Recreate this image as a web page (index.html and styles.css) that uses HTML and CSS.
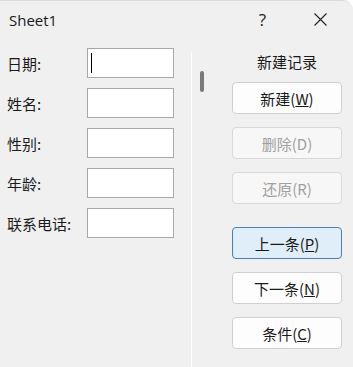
FILE: index.html
```html
<!DOCTYPE html>
<html lang="zh-CN">
  <head>
    <meta charset="UTF-8" />
    <title>Sheet1</title>
    <link rel="stylesheet" href="styles.css">
  </head>
  <body>
    <div class="window">
      <div class="titlebar">
        <span class="title">Sheet1</span>
        <span class="help">?</span>
        <svg class="close" width="13" height="13" viewBox="0 0 13 13">
          <path d="M0.5 0.5 L12.5 12.5 M12.5 0.5 L0.5 12.5" stroke="#222" stroke-width="1.1" fill="none" />
        </svg>
      </div>

      <div class="content">
        <div class="fields">
          <div class="row">
            <label>日期:</label>
            <div class="box"><span class="caret"></span></div>
          </div>
          <div class="row">
            <label>姓名:</label>
            <div class="box"></div>
          </div>
          <div class="row">
            <label>性别:</label>
            <div class="box"></div>
          </div>
          <div class="row">
            <label>年龄:</label>
            <div class="box"></div>
          </div>
          <div class="row">
            <label>联系电话:</label>
            <div class="box"></div>
          </div>
        </div>

        <div class="divider"></div>

        <div class="scroll">
          <div class="thumb"></div>
        </div>

        <div class="actions">
          <div class="record">新建记录</div>
          <button class="btn">新建(<u>W</u>)</button>
          <button class="btn" disabled>删除(D)</button>
          <button class="btn" disabled>还原(R)</button>
          <button class="btn focus spaced">上一条(<u>P</u>)</button>
          <button class="btn">下一条(<u>N</u>)</button>
          <button class="btn">条件(<u>C</u>)</button>
        </div>
      </div>
    </div>
  </body>
</html>
```

FILE: styles.css
```css
body {
  margin: 0;
  padding: 0;
  background-color: #ffffff;
  font-family: "Noto Sans CJK SC", "Noto Sans", sans-serif;
  color: #1a1a1a;
}

.window {
  width: 353px;
  height: 367px;
  background-color: #f0f0f0;
  border-top: 1px solid #dcdcdc;
  border-top-right-radius: 10px;
  box-sizing: border-box;
  overflow: hidden;
}

.titlebar {
  height: 37px;
  display: flex;
  align-items: center;
  padding-left: 9px;
}

.title {
  font-family: "Open Sans", "Noto Sans", sans-serif;
  font-size: 15px;
  flex: 1;
}

.help {
  font-family: "Open Sans", "Noto Sans", sans-serif;
  font-size: 17px;
  margin-right: 48px;
}

.close {
  margin-right: 26px;
}

.content {
  display: flex;
}

.fields {
  width: 191px;
  padding-top: 10px;
  display: flex;
  flex-direction: column;
  gap: 10px;
}

.row {
  display: flex;
  align-items: center;
  height: 30px;
}

.row label {
  width: 80px;
  padding-left: 7px;
  font-size: 15px;
}

.box {
  width: 87px;
  height: 30px;
  box-sizing: border-box;
  background-color: #ffffff;
  border: 1px solid #a8a8a8;
  position: relative;
}

.caret {
  position: absolute;
  left: 3px;
  top: 4px;
  width: 1px;
  height: 20px;
  background-color: #000;
}

.divider {
  width: 1px;
  margin-top: 14px;
  height: 320px;
  background-color: #ffffff;
}

.scroll {
  width: 40px;
}

.thumb {
  width: 4px;
  height: 21px;
  margin-top: 33px;
  margin-left: 8px;
  border-radius: 2px;
  background-color: #7a7a7a;
}

.actions {
  width: 110px;
  padding-top: 14px;
  display: flex;
  flex-direction: column;
}

.record {
  height: 20px;
  line-height: 20px;
  text-align: center;
  font-size: 15px;
  margin-bottom: 10px;
}

.btn {
  height: 32px;
  margin-bottom: 13px;
  background-color: #fdfdfd;
  border: 1px solid #d0d0d0;
  border-radius: 4px;
  font-family: "Noto Sans CJK SC", "Noto Sans", sans-serif;
  font-size: 15px;
  color: #1a1a1a;
  padding: 0;
}

.btn:disabled {
  color: #a0a0a0;
  background-color: #f7f7f7;
  border-color: #d8d8d8;
}

.btn.spaced {
  margin-top: 10px;
}

.btn.focus {
  background-color: #e0eef9;
  border-color: #4a7fb0;
}
```
